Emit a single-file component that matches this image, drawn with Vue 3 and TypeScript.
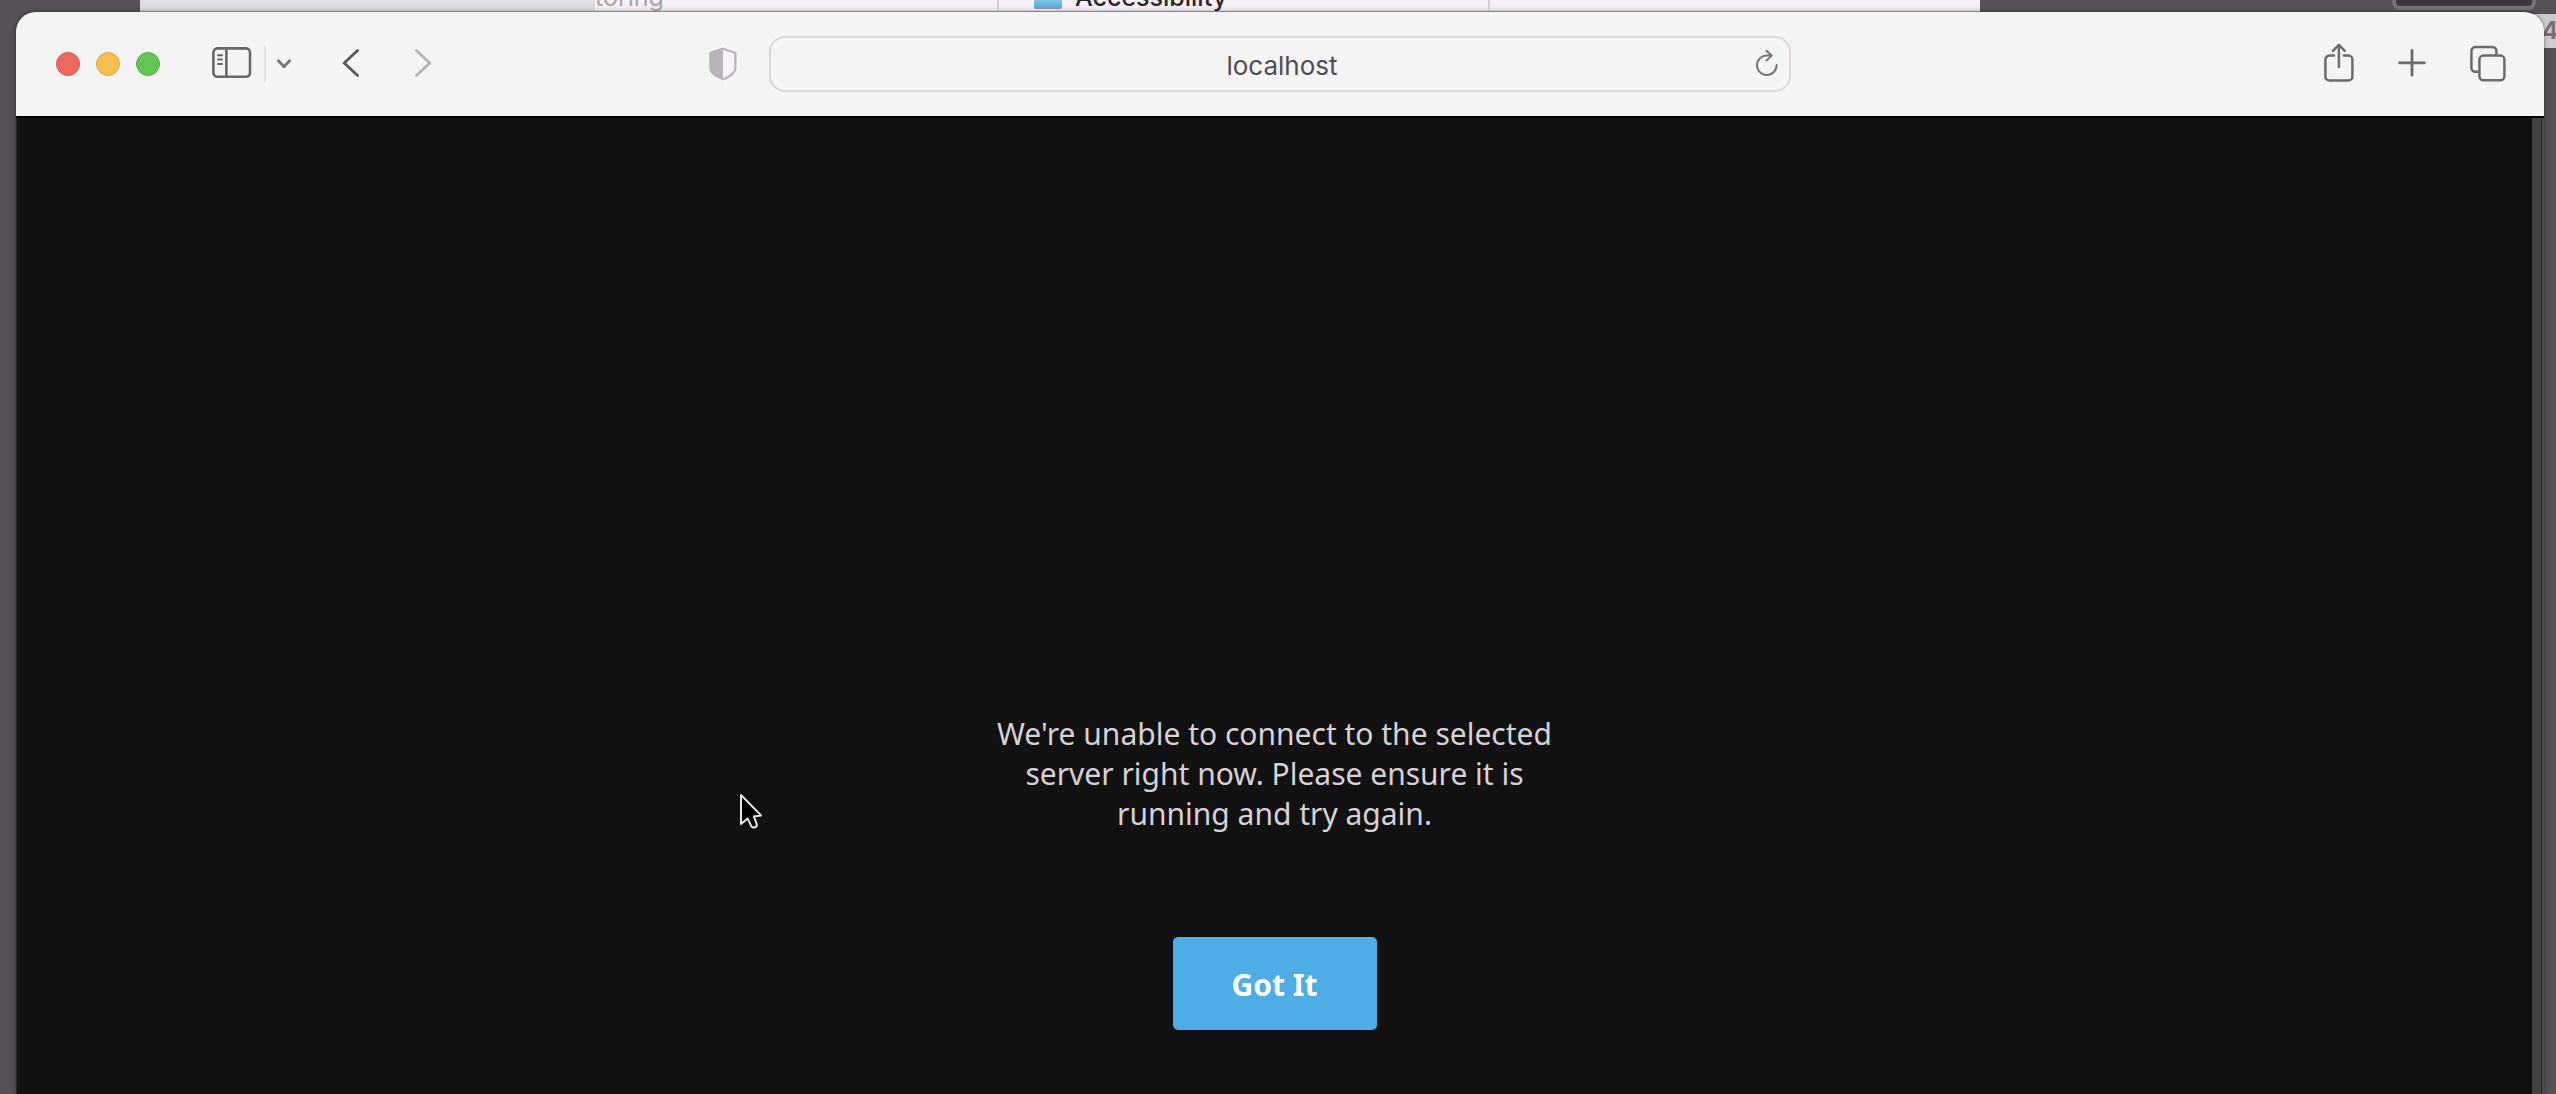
<script setup lang="ts">
import { ref } from 'vue'

const address = ref('localhost')
const dismissed = ref(false)
const lights: { name: string; tone: string }[] = [
  { name: 'Close', tone: 'red' },
  { name: 'Minimise', tone: 'amber' },
  { name: 'Zoom', tone: 'green' },
]
</script>

<template>
  <div class="desktop">
    <!-- window and widgets behind the browser -->
    <div class="back-window">
      <div class="back-side"></div>
      <div class="back-tab muted"><span>toring</span></div>
      <div class="back-tab active">
        <i class="folder"></i><span>Accessibility</span>
      </div>
      <div class="back-rest"></div>
    </div>
    <div class="back-chip"></div>
    <div class="back-badge">4</div>

    <div class="browser">
      <header class="toolbar">
        <div class="side left">
          <div class="lights">
            <button v-for="l in lights" :key="l.name" class="light" :class="l.tone" :aria-label="l.name"></button>
          </div>
          <button class="icon sidebar" aria-label="Show sidebar">
            <svg width="40" height="34" viewBox="0 0 40 34" fill="none" stroke="#6a666b" stroke-width="2.6" stroke-linecap="round">
              <rect x="1.4" y="1.4" width="36.6" height="28.4" rx="4" />
              <path d="M14.4 1.6V29.6" />
              <path d="M6 8.2h4M6 12.6h4M6 17h4" stroke-width="2" />
            </svg>
          </button>
          <span class="rule"></span>
          <button class="icon chevron" aria-label="Tab groups">
            <svg width="16" height="12" viewBox="0 0 16 12" fill="none" stroke="#78747a" stroke-width="2.8" stroke-linecap="round" stroke-linejoin="round">
              <path d="M2.4 2.8 8 8.8l5.600-6" />
            </svg>
          </button>
          <button class="icon back" aria-label="Back">
            <svg width="18" height="32" viewBox="0 0 18 32" fill="none" stroke="#5c575d" stroke-width="2.8" stroke-linecap="round" stroke-linejoin="round">
              <path d="M15.6 2.4 2.2 15l13.4 12.6" />
            </svg>
          </button>
          <button class="icon forward" aria-label="Forward">
            <svg width="18" height="32" viewBox="0 0 18 32" fill="none" stroke="#b6b2b7" stroke-width="2.8" stroke-linecap="round" stroke-linejoin="round">
              <path d="M2.4 2.4 15.8 15 2.4 27.6" />
            </svg>
          </button>
          <button class="icon shield" aria-label="Privacy report">
            <svg width="28" height="34" viewBox="0 0 28 34">
              <path d="M14 1.6 26.4 6v15c0 5-6.4 9-12.4 11.4" fill="none" stroke="#b8b4ba" stroke-width="2.2" stroke-linejoin="round" />
              <path d="M14 .4 1.6 4.6Q.2 5 .2 6.6V21c0 5.600 7 9.600 13.800 12.400z" fill="#b8b4ba" />
            </svg>
          </button>
        </div>

        <div class="address">
          <input v-model="address" type="text" aria-label="Address" />
          <button class="icon reload" aria-label="Reload">
            <svg width="24" height="28" viewBox="0 0 24 28" fill="none" stroke="#78737a" stroke-width="2" stroke-linecap="round" stroke-linejoin="round">
              <path d="M21.600 16A9.800 9.800 0 1 1 12 6.400h4.400" />
              <path d="M11.400 1.800 16.600 6.600 11.400 11.600" />
            </svg>
          </button>
        </div>

        <div class="side right">
          <button class="icon" aria-label="Share">
            <svg width="30" height="42" viewBox="0 0 30 42" fill="none" stroke="#6d696e" stroke-width="2.500" stroke-linecap="round" stroke-linejoin="round">
              <path d="M10 12.600H5.400a4 4 0 0 0-4 4V33.400a4 4 0 0 0 4 4h19a4 4 0 0 0 4-4V16.600a4 4 0 0 0-4-4H19.800" />
              <path d="M14.900 24V2M9 7.800l5.900-6 5.900 6" />
            </svg>
          </button>
          <button class="icon" aria-label="New tab">
            <svg width="28" height="42" viewBox="0 0 28 42" fill="none" stroke="#6d696e" stroke-width="2.800" stroke-linecap="round">
              <path d="M14 7.400v24.800M1.600 19.800h24.800" />
            </svg>
          </button>
          <button class="icon" aria-label="Show all tabs">
            <svg width="36" height="42" viewBox="0 0 36 42" fill="none" stroke="#6d696e" stroke-width="2.500" stroke-linejoin="round">
              <path d="M9.400 28.800H5.400a4 4 0 0 1-4-4V8a4 4 0 0 1 4-4H22.400a4 4 0 0 1 4 4V12.600" />
              <rect x="9.400" y="12.600" width="25" height="24.600" rx="4" />
            </svg>
          </button>
        </div>
      </header>

      <div class="page">
        <main class="notice">
          <p>We're unable to connect to the selected server right now. Please ensure it is running and try again.</p>
          <button class="confirm" @click="dismissed = true">Got It</button>
        </main>
        <div class="track"></div>
      </div>
    </div>

    <svg class="pointer" width="28" height="40" viewBox="0 0 28 40">
      <path d="M2 2V31L8.600 25.400 12.400 33.400Q14.800 35.600 17.600 33.200L17.800 31.400 14.800 23.400 22 22.400Z" fill="#000" stroke="#e8e6e9" stroke-width="2" stroke-linejoin="round" />
    </svg>
  </div>
</template>

<style>
body {
  background: #524c53;
}
</style>

<style scoped>
* {
  box-sizing: border-box;
}
.desktop {
  position: relative;
  display: flex;
  min-height: 100vh;
  padding: 12px 12px 0 16px;
  overflow: hidden;
  background: #565057;
  font-family: Inter, "Liberation Sans", sans-serif;
}
.back-window {
  position: absolute;
  top: 0;
  left: 140px;
  display: flex;
  width: 1840px;
  height: 12px;
  overflow: hidden;
  background: linear-gradient(#f7f1f8, #f0eaf1);
  border-bottom: 1px solid #aaa5ab;
}
.back-side {
  width: 455px;
  background: linear-gradient(#e2dfe4, #dad6db);
}
.back-tab {
  display: flex;
  height: 12px;
  border-right: 2px solid #d3cdd4;
  overflow: hidden;
}
.back-tab span {
  height: 28px;
  margin-top: -14px;
  font-size: 25px;
  line-height: 22px;
}
.muted {
  width: 404px;
  color: #aaa5ab;
}
.active {
  width: 491px;
  padding-left: 35px;
  color: #2a272b;
  font-weight: 500;
}
.folder {
  width: 28px;
  height: 9px;
  margin-right: 13px;
  background: linear-gradient(#84c4ea, #5ba9d8);
  border-bottom: 1px solid #8a9aa5;
  border-radius: 0 0 2px 2px;
}
.back-rest {
  flex: 1;
}
.back-chip {
  position: absolute;
  top: -20px;
  right: 20px;
  width: 144px;
  height: 30px;
  background: #3d383e;
  border: 4px solid #777178;
  border-radius: 8px;
}
.back-badge {
  position: absolute;
  top: 14px;
  right: 0;
  width: 30px;
  height: 34px;
  padding-left: 16px;
  overflow: hidden;
  background: #cfccd0;
  color: #777278;
  font-size: 24px;
  font-weight: 700;
  line-height: 34px;
}
.browser {
  position: relative;
  display: flex;
  flex: 1;
  flex-direction: column;
  overflow: hidden;
  border-radius: 20px 20px 0 0;
  box-shadow: 0 0 4px rgba(20, 14, 20, 0.5);
}
.toolbar {
  display: grid;
  grid-template-columns: 1fr minmax(0, 1022px) 1fr;
  align-items: center;
  height: 104px;
  background: #f5f4f5;
}
button {
  padding: 0;
  border: 0;
  background: none;
  font: inherit;
}
.icon {
  display: block;
  flex: none;
}
.icon svg {
  display: block;
}
.side {
  display: flex;
  align-items: center;
}
.left {
  padding: 0 32px 0 40px;
}
.right {
  justify-content: flex-end;
  gap: 44px;
  padding-right: 38px;
}
.lights {
  display: flex;
  gap: 16px;
}
.light {
  width: 24px;
  height: 24px;
  border: 1px solid #e0574f;
  border-radius: 50%;
  background: #ed695f;
}
.amber {
  border-color: #e3aa3c;
  background: #f6be4f;
}
.green {
  border-color: #54b147;
  background: #62c554;
}
.sidebar {
  margin-left: 52px;
}
.rule {
  width: 2px;
  height: 36px;
  margin-left: 12px;
  background: #e3e0e4;
}
.chevron {
  margin-left: 10px;
}
.back {
  margin-left: 50px;
}
.forward {
  margin-left: 54px;
}
.shield {
  margin-left: auto;
}
.address {
  position: relative;
}
.address input {
  display: block;
  width: 100%;
  height: 56px;
  padding: 2px 0 0 4px;
  border: 2px solid #dfd6e0;
  border-radius: 16px;
  outline: none;
  background: #f5f4f5;
  color: #514c52;
  font-family: inherit;
  font-size: 26px;
  text-align: center;
}
.reload {
  position: absolute;
  top: 13px;
  right: 12px;
}
.page {
  display: flex;
  flex: 1;
  padding-right: 2px;
  border-top: 2px solid #050106;
  border-left: 1px solid #2b262d;
  background: #4c464d;
}
.notice {
  display: flex;
  flex: 1;
  flex-direction: column;
  align-items: center;
  padding-top: 596px;
  background: #111;
}
.notice p {
  width: 580px;
  margin: 0 0 103px;
  color: #d6d1d7;
  font-family: "Noto Sans", sans-serif;
  font-size: 30px;
  line-height: 40px;
  text-align: center;
}
.confirm {
  width: 204px;
  height: 93px;
  padding-top: 2px;
  border-radius: 5px;
  background: #4dade4;
  color: #fff;
  font-family: "Noto Sans", sans-serif;
  font-size: 30px;
  font-weight: 700;
}
.track {
  width: 10px;
  border-right: 1px solid #2b262b;
  background: #424043;
}
.pointer {
  position: absolute;
  top: 793px;
  left: 739px;
}
</style>
